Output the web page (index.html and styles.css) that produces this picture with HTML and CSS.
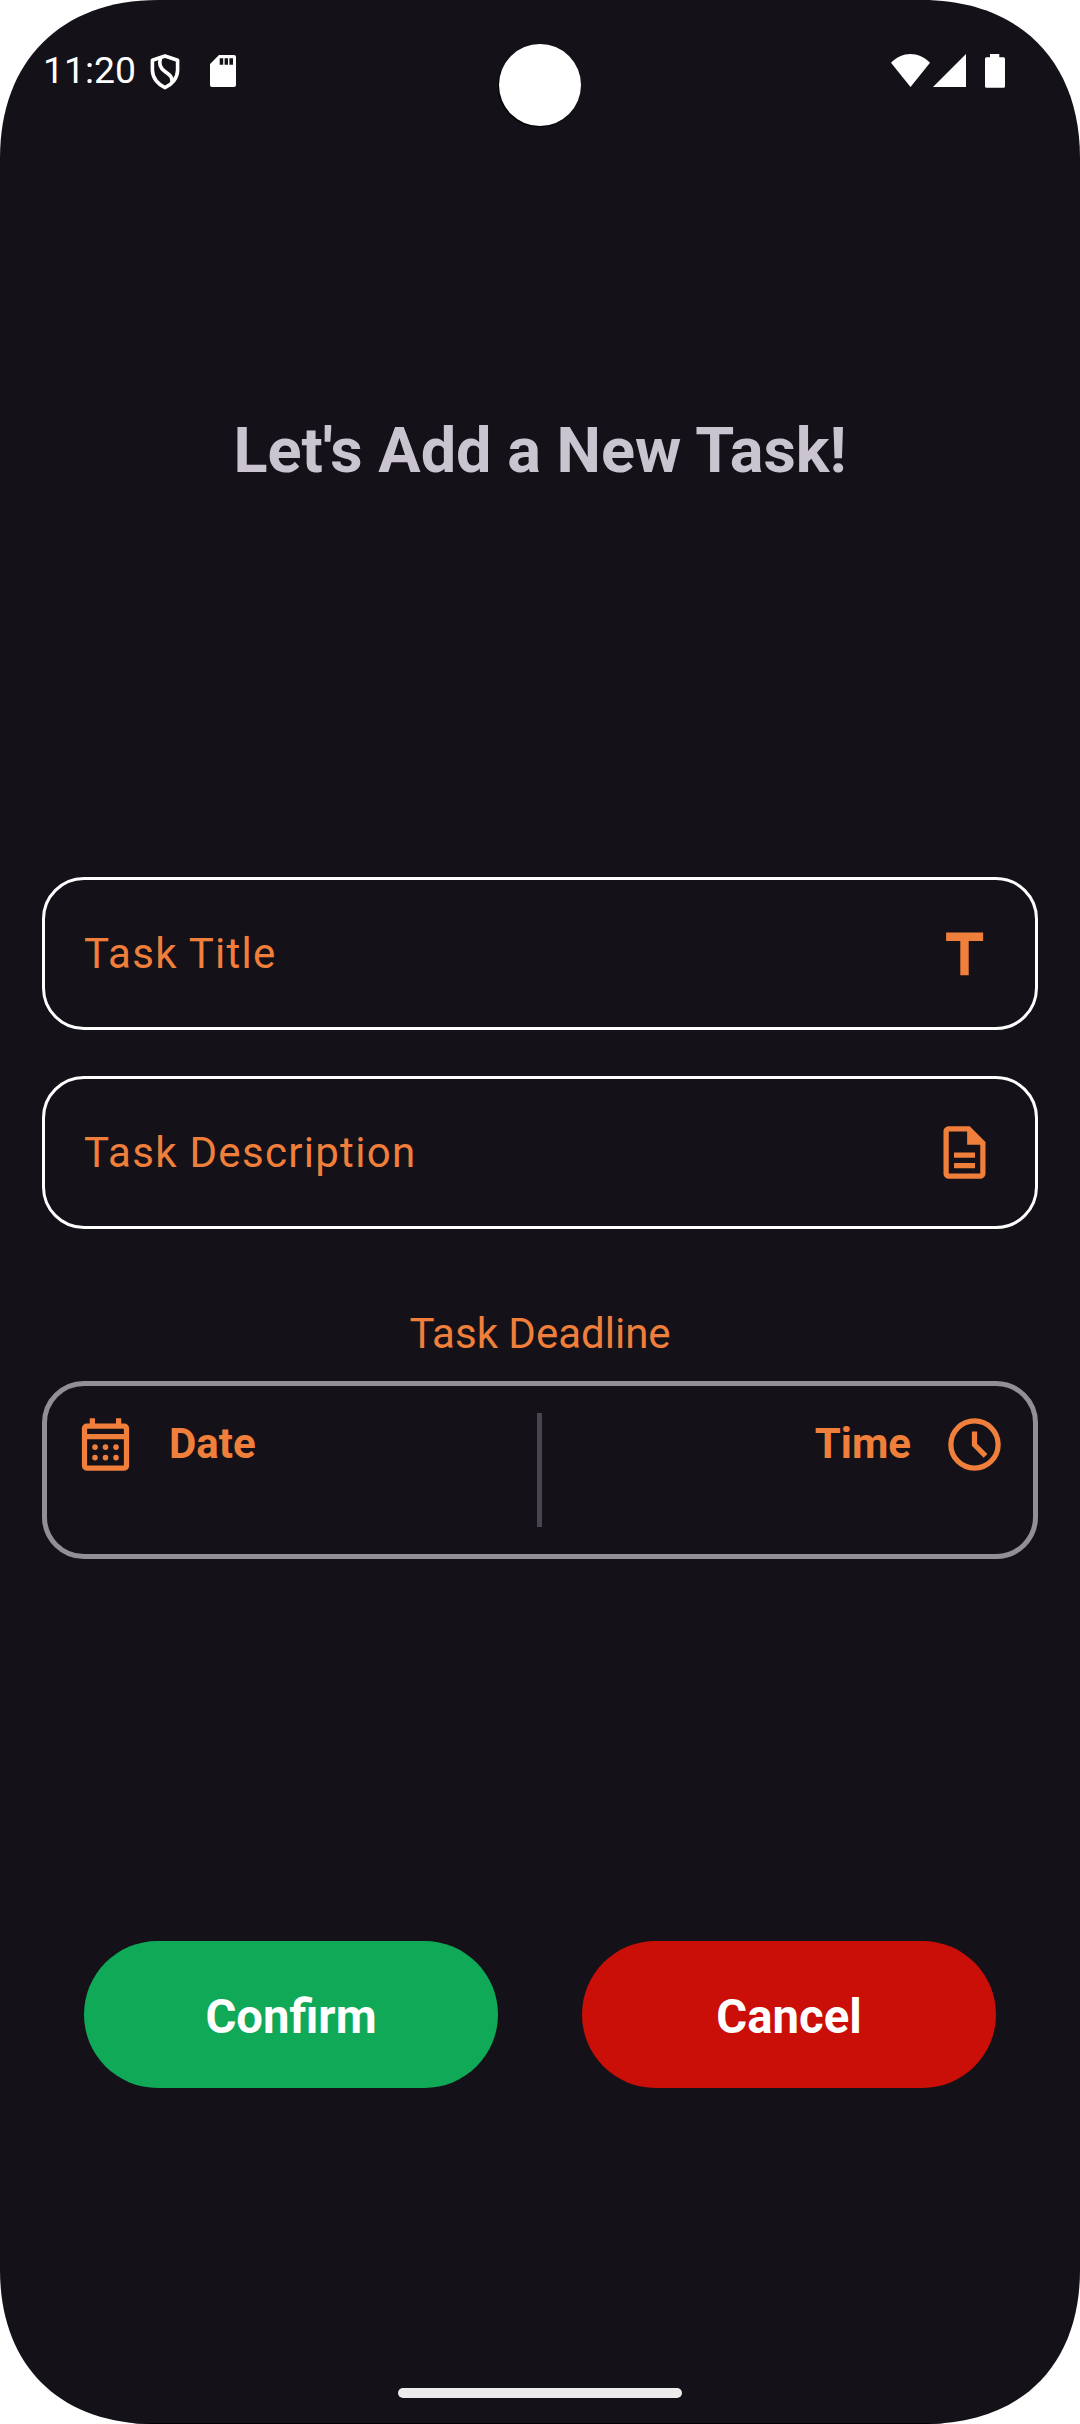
FILE: index.html
```html
<!DOCTYPE html>
<html lang="en">
<head>
<meta charset="utf-8">
<title>Add Task</title>
<link rel="stylesheet" href="styles.css">
</head>
<body>
<div class="screen">
  <header class="status">
    <span class="clock">11:20</span>
    <svg class="shield" viewBox="0 0 30 36" fill="none" stroke="#fff" stroke-width="3.600" stroke-linejoin="round"><path d="M15 2 27.6 6.3V16C27.6 24 22 30.5 15 33.6 8 30.5 2.4 24 2.4 16V6.3Z"/><path d="M10.500 4.500C8.500 10 10 14 15 17.500S22.500 23 22 28"/></svg>
    <svg class="sd" viewBox="0 0 26 32"><path fill="#fff" fill-rule="evenodd" d="M9 0H24a2 2 0 0 1 2 2V30a2 2 0 0 1-2 2H2a2 2 0 0 1-2-2V9ZM9.700 3.300V9.700H13.200V3.300ZM14.600 3.300V9.700H18V3.300ZM19.400 3.300V9.700H23V3.300Z"/></svg>
    <svg class="wifi" viewBox="0 0 39 33" fill="#fff"><path d="M0 8.700C11-2.900 28-2.900 39 8.700L19.500 33Z"/></svg>
    <svg class="signal" viewBox="0 0 33 33" fill="#fff"><path d="M33 0V33H0Z"/></svg>
    <svg class="battery" viewBox="0 0 20 34" fill="#fff"><path d="M5 0H14.300V3.300H18.500Q20 3.300 20 4.800V32.300Q20 33.800 18.500 33.800H1.500Q0 33.800 0 32.300V4.800Q0 3.300 1.500 3.300H5Z"/></svg>
    <i class="camera"></i>
  </header>
  <h1 class="title">Let's Add a New Task!</h1>
  <main class="form">
    <div class="field">
      <span>Task Title</span>
      <svg class="icon" viewBox="0 0 24 24"><path d="M5 4v3.200h5.400v13.100h3.200V7.200H19.100V4z"/></svg>
    </div>
    <div class="field">
      <span>Task Description</span>
      <svg class="icon" viewBox="0 0 24 24"><path d="M8 16h8v2H8zm0-4h8v2H8zm6-10H6c-1.100 0-2 .9-2 2v16c0 1.100.89 2 1.990 2H18c1.100 0 2-.9 2-2V8l-6-6zm4 18H6V4h7v5h5v11z"/></svg>
    </div>
    <div class="label">Task Deadline</div>
    <div class="deadline">
      <div class="pick">
        <svg class="icon" viewBox="0 0 24 24"><path fill-rule="evenodd" d="M6 2h2v2h8V2h2v2h1.200a1.800 1.800 0 0 1 1.800 1.800V20.200a1.800 1.800 0 0 1-1.800 1.800H4.800A1.800 1.800 0 0 1 3 20.200V5.800A1.800 1.800 0 0 1 4.800 4H6zM5 6v2h14V6zM5 10v10h14V10z"/><circle cx="8" cy="13" r="1.050"/><circle cx="12" cy="13" r="1.050"/><circle cx="16" cy="13" r="1.050"/><circle cx="8" cy="17" r="1.050"/><circle cx="12" cy="17" r="1.050"/><circle cx="16" cy="17" r="1.050"/></svg>
        <span>Date</span>
      </div>
      <i class="divider"></i>
      <div class="pick pick-end">
        <span>Time</span>
        <svg class="icon line" viewBox="0 0 24 24"><circle cx="12" cy="12" r="9"/><path d="M12 7v5.100l4.200 4.200"/></svg>
      </div>
    </div>
  </main>
  <div class="actions">
    <button class="btn confirm">Confirm</button>
    <button class="btn cancel">Cancel</button>
  </div>
  <div class="home"></div>
</div>
</body>
</html>
```
FILE: styles.css
```css
* { box-sizing: border-box; }
body { margin: 0; background: #fff; font-family: Roboto, "Liberation Sans", sans-serif; }
svg { display: block; flex: none; }
.screen {
  width: 1080px;
  height: 2424px;
  display: flex;
  flex-direction: column;
  background: #141218;
  border-bottom: 1px solid #000;
  clip-path: path("M0 158C0 61 61 0 158 0H922C1019 0 1080 61 1080 158V2270C1080 2365 1021 2424 926 2424H154C59 2424 0 2365 0 2270Z");
}
.status {
  position: relative;
  height: 142px;
  flex: none;
  display: flex;
  align-items: flex-start;
  padding: 54px 75px 0 43px;
  color: #fff;
}
.clock { width: 107px; font-size: 37.3px; line-height: 43px; margin-top: -5px; }
.shield { width: 30px; height: 36px; }
.sd { width: 26px; height: 32px; margin: 1px 0 0 30px; }
.wifi { width: 39px; height: 33px; margin-left: auto; }
.signal { width: 33px; height: 33px; margin-left: 3px; }
.battery { width: 20px; height: 34px; margin-left: 19px; }
.camera {
  position: absolute;
  left: 499px;
  top: 44px;
  width: 82px;
  height: 82px;
  border-radius: 50%;
  background: #fff;
  box-shadow: -1px 1px 1px #000;
}
.title {
  margin: 272px 0 0;
  font-size: 63px;
  line-height: 74px;
  font-weight: 700;
  text-align: center;
  color: #cac4d0;
  flex: none;
}
.form { padding: 0 42px; margin-top: 389px; color: #ef7f3b; font-size: 42px; line-height: 50px; }
.field {
  height: 153px;
  display: flex;
  align-items: center;
  justify-content: space-between;
  padding: 0 39px;
  border: 3px solid #fff;
  border-radius: 42px;
  letter-spacing: 1.3px;
}
.field + .field { margin-top: 46px; }
.icon { width: 63px; height: 63px; fill: #ef7f3b; }
.icon.line { fill: none; stroke: #ef7f3b; stroke-width: 2; }
.label { margin-top: 80px; text-align: center; }
.deadline {
  height: 178px;
  margin-top: 22px;
  padding: 27px 28px 27px 27px;
  display: flex;
  border: 5px solid #938f94;
  border-radius: 42px;
}
.pick { flex: 1; display: flex; align-items: center; height: 63px; gap: 32px; font-weight: 700; }
.pick span { padding-bottom: 2px; }
.pick-end { justify-content: flex-end; margin-right: -1px; margin-left: 1px; }
.divider { width: 5px; background: #49454f; }
.actions { display: flex; gap: 84px; padding: 0 84px; margin-top: 382px; }
.btn {
  flex: 1;
  height: 147px;
  border: 0;
  border-radius: 74px;
  padding: 4px 0 0;
  color: #fff;
  font: 700 47.25px/56px Roboto, "Liberation Sans", sans-serif;
}
.confirm { background: #0fa958; }
.cancel { background: #c90f08; }
.home { width: 284px; height: 10px; margin: auto auto 25px; border-radius: 5px; background: #ececec; }
```
